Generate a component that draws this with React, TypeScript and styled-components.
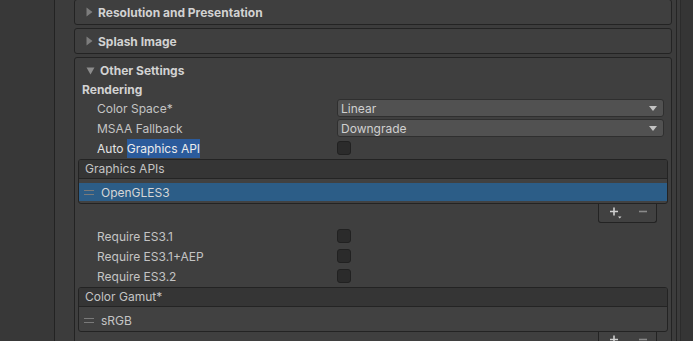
import React from "react";
import styled, { createGlobalStyle } from "styled-components";

const GlobalStyle = createGlobalStyle`
  body {
    margin: 0;
    background: #383838;
    font-family: Inter, "Noto Sans", sans-serif;
    font-size: 12px;
    color: #c4c4c4;
  }
`;

const Window = styled.div`
  display: flex;
  height: 341px;
  overflow: hidden;
`;

const SidePane = styled.div`
  width: 54px;
  flex-shrink: 0;
  background: #383838;
  border-right: 1px solid #232323;
`;

const Inspector = styled.div`
  flex: 1;
  display: flex;
  flex-direction: column;
  gap: 3px;
  padding: 0 4px 0 19px;
  background: #3c3c3c;
  overflow: hidden;
`;

const ScrollGutter = styled.div`
  width: 3px;
  flex-shrink: 0;
  background: #3c3c3c;
  border-left: 1px solid #252525;
  border-right: 1px solid #2b2b2b;
`;

const ScrollTrack = styled.div`
  width: 12px;
  flex-shrink: 0;
  background: #353535;
`;

const Foldout = styled.section<{ $clipped?: boolean }>`
  flex-shrink: 0;
  border: 1px solid #232323;
  border-radius: 3px;
  background: #3f3f3f;
  margin-top: ${(p) => (p.$clipped ? "-1px" : "0")};
`;

const FoldoutHeader = styled.div`
  height: 24px;
  display: flex;
  align-items: center;
  gap: 5px;
  padding-left: 11px;
  font-weight: 700;
  color: #d2d2d2;
`;

const FoldoutBody = styled.div`
  display: flex;
  flex-direction: column;
  padding: 0 3px;
`;

const SectionLabel = styled.div`
  height: 16px;
  line-height: 16px;
  padding-left: 4px;
  font-weight: 700;
  color: #d2d2d2;
`;

const Row = styled.div`
  display: grid;
  grid-template-columns: 240px 1fr;
  align-items: center;
  height: 20px;
  padding: 0 4px 0 19px;
`;

const Label = styled.span<{ $active?: boolean }>`
  color: ${(p) => (p.$active ? "#e4e4e4" : "#c4c4c4")};
  white-space: nowrap;
`;

const Selection = styled.span`
  background: #2b5b9c;
  color: #ececec;
  padding: 2px 0;
`;

const Dropdown = styled.div`
  height: 16px;
  display: flex;
  align-items: center;
  justify-content: space-between;
  padding: 0 6px 0 3px;
  background: #515151;
  border: 1px solid #2f2f2f;
  border-radius: 3px;
  color: #d0d0d0;
`;

const Checkbox = styled.div`
  width: 12px;
  height: 12px;
  background: #2b2b2b;
  border: 1px solid #212121;
  border-radius: 3px;
`;

const List = styled.div`
  margin-top: 1px;
  border: 1px solid #232323;
  border-radius: 3px;
  background: #414141;
  overflow: hidden;
`;

const ListHeader = styled.div`
  height: 18px;
  line-height: 18px;
  padding-left: 6px;
  background: #353535;
  border-bottom: 1px solid #242424;
  color: #c4c4c4;
`;

const ListItems = styled.div`
  padding: 4px 0 2px;
`;

const ListItem = styled.div<{ $selected?: boolean }>`
  height: 18px;
  display: flex;
  align-items: center;
  gap: 7px;
  padding-left: 5px;
  background: ${(p) => (p.$selected ? "#2c5d87" : "transparent")};
  color: ${(p) => (p.$selected ? "#d6d6d6" : "#c4c4c4")};
`;

const ListFooter = styled.div`
  align-self: flex-end;
  width: 55px;
  height: 18px;
  margin-right: 11px;
  display: flex;
  align-items: center;
  justify-content: space-around;
  padding-left: 2px;
  background: #414141;
  border: 1px solid #232323;
  border-top: none;
  border-radius: 0 0 3px 3px;
`;

const Spacer = styled.div<{ $h: number }>`
  height: ${(p) => p.$h}px;
  flex-shrink: 0;
`;

const Arrow = ({ open }: { open?: boolean }) =>
  open ? (
    <svg width="9" height="9" viewBox="0 0 9 9">
      <path d="M0.5 1.5h8L4.5 8.5z" fill="#8c8c8c" />
    </svg>
  ) : (
    <svg width="7" height="10" viewBox="0 0 7 10">
      <path d="M0.5 0.5v9l6-4.5z" fill="#7d7d7d" />
    </svg>
  );

const DropArrow = () => (
  <svg width="8" height="5" viewBox="0 0 8 5">
    <path d="M0 0h8L4 5z" fill="#c4c4c4" />
  </svg>
);

const Handle = () => (
  <svg width="10" height="5" viewBox="0 0 10 5">
    <path d="M0 0.5h10M0 4.5h10" stroke="#7a7a7a" strokeWidth="1" />
  </svg>
);

const PlusButton = () => (
  <svg width="12" height="12" viewBox="0 0 12 12">
    <path d="M4 0.5v8M0 4.5h8" stroke="#cfcfcf" strokeWidth="1.6" />
    <path d="M8 9.5h3.5l-1.75 2z" fill="#cfcfcf" />
  </svg>
);

const MinusButton = () => (
  <svg width="8" height="12" viewBox="0 0 8 12">
    <path d="M0 4.5h8" stroke="#8a8a8a" strokeWidth="1.6" />
  </svg>
);

const Footer = () => (
  <ListFooter>
    <PlusButton />
    <MinusButton />
  </ListFooter>
);

const App = (): JSX.Element => (
  <>
    <GlobalStyle />
    <Window>
      <SidePane />
      <Inspector>
        <Foldout $clipped>
          <FoldoutHeader>
            <Arrow />
            Resolution and Presentation
          </FoldoutHeader>
        </Foldout>
        <Foldout>
          <FoldoutHeader>
            <Arrow />
            Splash Image
          </FoldoutHeader>
        </Foldout>
        <Foldout>
          <FoldoutHeader>
            <Arrow open />
            Other Settings
          </FoldoutHeader>
          <FoldoutBody>
            <SectionLabel>Rendering</SectionLabel>
            <Row>
              <Label>Color Space*</Label>
              <Dropdown>
                Linear
                <DropArrow />
              </Dropdown>
            </Row>
            <Row>
              <Label>MSAA Fallback</Label>
              <Dropdown>
                Downgrade
                <DropArrow />
              </Dropdown>
            </Row>
            <Row>
              <Label $active>
                Auto <Selection>Graphics API</Selection>
              </Label>
              <Checkbox />
            </Row>
            <List>
              <ListHeader>Graphics APIs</ListHeader>
              <ListItems>
                <ListItem $selected>
                  <Handle />
                  OpenGLES3
                </ListItem>
              </ListItems>
            </List>
            <Footer />
            <Spacer $h={3} />
            <Row>
              <Label>Require ES3.1</Label>
              <Checkbox />
            </Row>
            <Row>
              <Label>Require ES3.1+AEP</Label>
              <Checkbox />
            </Row>
            <Row>
              <Label>Require ES3.2</Label>
              <Checkbox />
            </Row>
            <List>
              <ListHeader>Color Gamut*</ListHeader>
              <ListItems>
                <ListItem>
                  <Handle />
                  sRGB
                </ListItem>
              </ListItems>
            </List>
            <Footer />
          </FoldoutBody>
        </Foldout>
      </Inspector>
      <ScrollGutter />
      <ScrollTrack />
    </Window>
  </>
);

export default App;
